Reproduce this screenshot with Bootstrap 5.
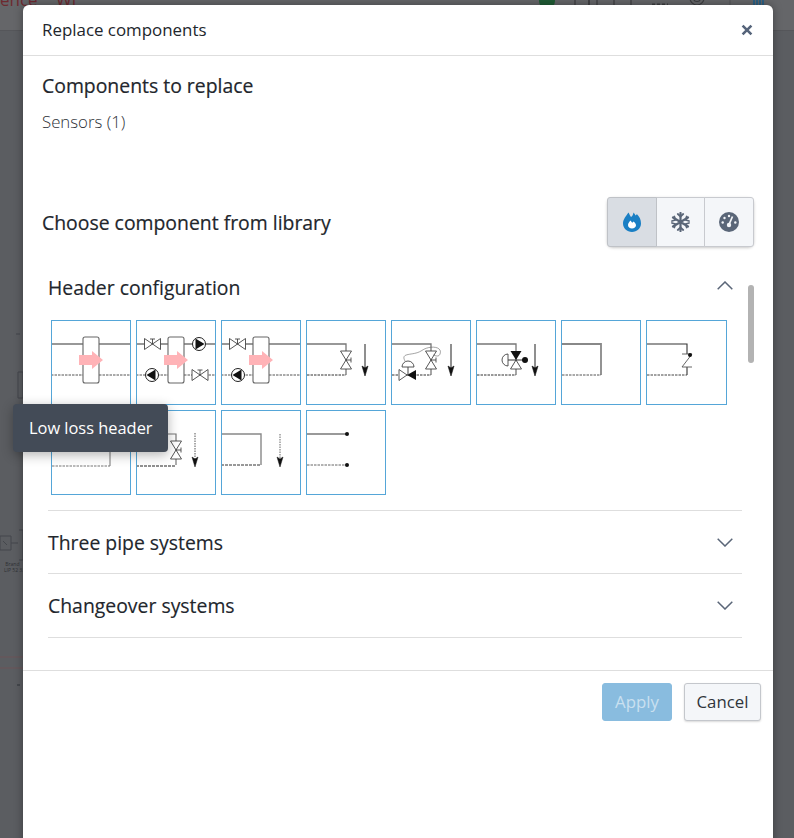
<!DOCTYPE html>
<html lang="en"><head><meta charset="utf-8"><title>Replace components</title>
<link href="https://cdn.jsdelivr.net/npm/bootstrap@5.3.0/dist/css/bootstrap.min.css" rel="stylesheet">
<style>
html,body{height:838px;overflow:hidden}
body{background:#5b5d61;font-family:"Open Sans","Noto Sans",sans-serif;color:#212529;position:relative}
.appbar{height:31px;background:#656669;border-bottom:1px solid #55565a;overflow:hidden;font-size:17px;line-height:1;color:#6e2a30;position:absolute;top:0;left:0;right:0}
.appbar span{position:absolute;top:-9px}
.appbar svg{position:absolute;left:530px;top:-14px}
.bgmark{position:absolute;left:0;top:0}
.bg-note{position:absolute;left:4px;font-size:5px;line-height:1;color:#2e3034;white-space:nowrap}
.dlg-wrap{padding:5px 21px 0 23px;position:relative}
.dlg{height:900px;border:0;border-radius:6px;background:#fff;box-shadow:0 0 10px rgba(0,0,0,.35)}
.dlg .modal-header{height:51px;padding:0 18px 0 19px;border-bottom:1px solid #dedede;border-radius:6px 6px 0 0}
.dlg-title{font-size:16.9px;font-weight:400;color:#22262c;margin:0}
.x-close{background:none;border:0;padding:0;width:16px;height:16px;line-height:0}
.dlg-body{height:614px;flex:none;padding:0;position:relative}
.sub-h{font-size:19.4px;font-weight:500;margin:0;color:#22262c;-webkit-text-stroke:.2px #22262c}
.sec-top{padding:18px 19px 0}
.count{font-size:16.8px;font-weight:300;color:#2c3036;margin-top:12px}
.chooser{padding:0 19px 0;margin-top:63px;height:50px}
.type-group{width:147px;height:50px;box-shadow:0 1px 3px rgba(0,0,0,.22)}
.type-group .btn{width:49px;padding:0;background:#f4f6f9;border:1px solid #c8cacf;display:flex;align-items:center;justify-content:center;border-radius:0}
.type-group .btn.active{background:#d9dde3;border-color:#bfc2c7}
.type-group .btn:first-child{border-radius:3px 0 0 3px}
.type-group .btn:last-child{border-radius:0 3px 3px 0}
.acc{margin:16px 0 0 25px;width:694px}
.acc-item{border:0;border-bottom:1px solid #dedede;border-radius:0;background:#fff}
.acc-head{height:62px;display:flex;align-items:center;justify-content:space-between;padding:0 9px 0 0;font-size:19.4px;color:#22262c;font-weight:400;-webkit-text-stroke:.15px #22262c}
.acc-head.acc-first{height:48px}
.acc-first svg{margin-top:-4px}
.acc-head.acc-mid{padding-top:1px}
.acc-head.acc-last{height:63px}
.tile-grid{display:grid;grid-template-columns:repeat(8,80px);grid-auto-rows:85px;gap:5px;padding:9px 0 15px 3px}
.tile{border:1px solid #55a6d8;background:#fff;width:80px;height:85px;display:block}
.tile:nth-child(8){width:81px}
.tile svg{display:block}
.scroll-thumb{position:absolute;left:725px;top:229px;width:6px;height:78px;border-radius:3px;background:#b3b3b3}
.dlg-foot{height:65px;padding:12px 12px 0 0;border-top:1px solid #dedede;display:flex;justify-content:flex-end;align-items:flex-start;gap:12px}
.dlg-foot .btn{height:38px;font-size:16.8px;line-height:1;padding:1px 0 0;border-radius:3px;font-weight:400}
.btn-apply{width:70px;background:#89bcdf;border:1px solid #89bcdf;color:#c9e0f0}
.btn-apply:disabled{background:#89bcdf;border-color:#89bcdf;color:#c9e0f0;opacity:1}
.btn-cancel{width:77px;background:#f4f6f9;border:1px solid #c4c7cc;color:#2f343b;box-shadow:0 1px 2px rgba(0,0,0,.15)}
.tip{position:absolute;left:13px;top:404px;width:155px;height:48px;background:#434b57;color:#fff;border-radius:4px;font-size:16.4px;font-weight:400;display:flex;align-items:center;padding-left:16px;box-shadow:0 3px 12px rgba(0,0,0,.3);z-index:20}
</style></head><body>
<div class="appbar"><span style="left:0">ence</span><span style="left:56px">Wi</span>
<svg width="240" height="30" viewBox="0 0 240 30" fill="none" stroke="#3c3d40" stroke-width="1.2"><circle cx="17" cy="15" r="8" fill="#1f5c35" stroke="none"/><rect x="45" y="6" width="14" height="15"/><rect x="59" y="10" width="8" height="11"/><rect x="84" y="8" width="17" height="13"/><path d="M122 19h16" stroke-dasharray="3 2" stroke-width="3"/><circle cx="167" cy="12" r="7"/><circle cx="167" cy="12" r="3.5"/><path d="M200 0V30" stroke="#55565a"/><path d="M224 19v-6m3 6v-8m3 8v-6m3 6v-9" stroke="#1e5f8a" stroke-width="1.6"/></svg></div>
<svg class="bgmark" width="23" height="838" viewBox="0 0 23 838" fill="none" stroke="#44474c" stroke-width="1"><path d="M16 334h4M18 372h5v26h-5zM0 536h11v14H0zM11 543h7M19 530h4v30h-4M3 541l4 4"/><path d="M0 657h23M0 668h23" stroke="#6c5558"/><path d="M17 685h3" stroke-width="2"/></svg>
<span class="bg-note" style="top:562px">&nbsp;Brand</span><span class="bg-note" style="top:568px">LIP 52 33</span>

<svg width="0" height="0" class="d-block position-absolute"><defs>
<g id="lines" fill="none"><path d="M0 24H32M48 24H80" stroke="#777" stroke-width="1.3"/><path d="M0 55H32M48 55H80" stroke="#555" stroke-width="1" stroke-dasharray="2.5 1"/></g>
<g id="hdr"><rect x="32" y="17" width="16" height="46" rx="2" fill="#fff" stroke="#666" stroke-width="1.1"/><path d="M28 35H41V31L52 40 41 49V45H28Z" fill="#ffb3b7"/></g>
<g id="hv" fill="#fff" stroke="#444" stroke-width=".9"><path d="M0-5.5V5.5L8 0ZM16-5.5V5.5L8 0Z" transform="translate(-8 0)"/><path d="M0 0V-5M-2.5-5H2.5" fill="none"/></g>
<g id="vv" fill="#fff" stroke="#444" stroke-width=".9"><path d="M-5.5-9H5.5L0 0ZM-5.5 9H5.5L0 0Z"/><path d="M0 0H5M5-2.5V2.5" fill="none"/></g>
<g id="pump"><circle r="6.5" fill="#fff" stroke="#222" stroke-width="1"/><path d="M-3.5-5.5 5.5 0-3.5 5.5Z" fill="#111"/></g>
<g id="pumpl"><circle r="6.5" fill="#fff" stroke="#222" stroke-width="1"/><path d="M3.5-5.5-5.5 0 3.5 5.5Z" fill="#111"/></g>
<g id="loop" fill="none"><path d="M0 24H40V55" stroke="#777" stroke-width="1.3"/><path d="M1 55H40" stroke="#333" stroke-width="1" stroke-dasharray="2.5 1"/></g>
<g id="down"><path d="M0 0V28" stroke="#333" stroke-width="1.1"/><path d="M-3 22 0 32 3 22 0 24Z" fill="#111" stroke="#111" stroke-width=".6"/></g>
</defs></svg>

<div class="dlg-wrap">
<div class="modal-content dlg">
 <div class="modal-header"><h5 class="dlg-title">Replace components</h5>
 <button class="x-close" type="button" aria-label="Close"><svg width="16" height="16" viewBox="0 0 16 16"><path d="M3.6 3.6 12.4 12.4M12.4 3.6 3.6 12.4" stroke="#56647a" stroke-width="2.6"/></svg></button></div>
 <div class="modal-body dlg-body">
  <div class="sec-top"><h6 class="sub-h">Components to replace</h6><div class="count">Sensors (1)</div></div>
  <div class="chooser d-flex align-items-center justify-content-between"><h6 class="sub-h">Choose component from library</h6>
   <div class="btn-group type-group" role="group">
    <button type="button" class="btn active"><svg width="18" height="20" viewBox="0 0 18 20"><path d="M5.5 0.5C6.5 2.5 7 3.5 8 5 9.5 4 10 2.5 10.5.5c1 1 1.500 2 2 3 .5-.5 1-1 1.500-1.200C16.500 4.500 18 8 18 11.500 18 16.300 14 20 9 20S0 16.300 0 11.500C0 7.500 3 4 5.500.5Z" fill="#1a7fc4"/><path d="M9 16.500c-2.300 0-4-1.500-4-3.500 0-1.800 1.300-3 2.500-4.500.7 1 1.200 1.500 1.700 2.200.5-.4.8-.7 1.200-1.300 1.500 1 2.600 2.400 2.600 3.900 0 2-1.700 3.200-4 3.200Z" fill="#fff"/></svg></button>
    <button type="button" class="btn"><svg width="19" height="20" viewBox="0 0 19 20" stroke="#5a6678" stroke-width="2.200" fill="none" stroke-linecap="round"><path d="M9.500 1V19M2 5.500 17 14.500M17 5.500 2 14.500"/><path d="M6.800 2 9.500 4.500 12.200 2M6.800 18 9.500 15.500 12.200 18M1 9 4.300 8 3.300 4.500M18 9 14.700 8 15.700 4.500M1 11 4.300 12 3.300 15.500M18 11 14.700 12 15.700 15.500" stroke-width="1.800"/></svg></button>
    <button type="button" class="btn"><svg width="20" height="20" viewBox="0 0 20 20"><circle cx="10" cy="10" r="10" fill="#5a6678"/><path d="M10 12.500 13.500 4.500" stroke="#f4f6f9" stroke-width="1.800"/><circle cx="10" cy="13" r="2.200" fill="#f4f6f9"/><g fill="#f4f6f9"><circle cx="10" cy="4" r="1.200"/><circle cx="5.500" cy="6" r="1.200"/><circle cx="3.700" cy="10.500" r="1.200"/><circle cx="16.300" cy="10.500" r="1.200"/></g></svg></button>
   </div>
  </div>
  <div class="acc">
   <div class="acc-item">
    <div class="acc-head acc-first"><span>Header configuration</span><svg width="16" height="9" viewBox="0 0 16 9" fill="none"><path d="M.7 8.300 8 1l7.300 7.300" stroke="#5a6678" stroke-width="1.500"/></svg></div>
    <div class="tile-grid">
     <div class="tile"><svg width="78" height="83" viewBox="1 1 78 83"><use href="#lines"/><use href="#hdr"/></svg></div>
     <div class="tile"><svg width="78" height="83" viewBox="1 1 78 83"><use href="#lines"/><use href="#hdr"/><use href="#hv" x="16.500" y="24"/><use href="#pump" x="63" y="24"/><use href="#pumpl" x="16" y="55"/><use href="#hv" x="64" y="55"/></svg></div>
     <div class="tile"><svg width="78" height="83" viewBox="1 1 78 83"><use href="#lines"/><use href="#hdr"/><use href="#hv" x="16.500" y="24"/><use href="#pumpl" x="17" y="55"/></svg></div>
     <div class="tile"><svg width="78" height="83" viewBox="1 1 78 83"><use href="#loop"/><use href="#vv" x="40" y="40"/><use href="#down" x="59" y="24"/></svg></div>
     <div class="tile"><svg width="78" height="83" viewBox="1 1 78 83"><use href="#loop"/><use href="#vv" x="40" y="40"/><path d="M16 55 8 49.500V60.500Z" fill="#fff" stroke="#333" stroke-width=".8"/><path d="M16 55 25 50V60Z" fill="#111"/><path d="M17 55V47" stroke="#444"/><path d="M11 47a6 6 0 0 1 12 0Z" fill="#fff" stroke="#444" stroke-width=".9"/><path d="M14 41C9 32 22 36 30 31 38 25 52 26 49 34 48 37 45 36 42 35" fill="none" stroke="#666" stroke-width=".6"/><use href="#down" x="60" y="24"/></svg></div>
     <div class="tile"><svg width="78" height="83" viewBox="1 1 78 83"><use href="#loop"/><path d="M34.500 31H45.500L40 40Z" fill="#111"/><path d="M34.500 49H45.500L40 40Z" fill="#fff" stroke="#444" stroke-width=".9"/><path d="M32 40H49" stroke="#333"/><path d="M32 34a6 6 0 0 0 0 12Z" fill="#fff" stroke="#444" stroke-width=".9"/><circle cx="49" cy="40" r="3" fill="#111"/><use href="#down" x="59" y="24"/></svg></div>
     <div class="tile"><svg width="78" height="83" viewBox="1 1 78 83"><path d="M0 24H40V55" fill="none" stroke="#888" stroke-width="1.800"/><path d="M1 55H40" stroke="#555" stroke-dasharray="2.500 1"/></svg></div>
     <div class="tile"><svg width="79" height="83" viewBox="1 1 79 83"><path d="M0 24H41V34M41 47V55" fill="none" stroke="#333" stroke-width="1.100"/><path d="M36 34H46L36 47H46" fill="none" stroke="#555" stroke-width=".9"/><path d="M1 55H41" stroke="#444" stroke-dasharray="2.500 1"/><circle cx="44" cy="35" r="2" fill="#111"/></svg></div>
     <div class="tile"><svg width="78" height="83" viewBox="1 1 78 83"><path d="M0 24H59V56" fill="none" stroke="#777"/><path d="M1 56H59" stroke="#777" stroke-dasharray="2.500 1"/><path d="M41 30V42" stroke="#666"/></svg></div>
     <div class="tile"><svg width="78" height="83" viewBox="1 1 78 83"><path d="M0 24H40V55" fill="none" stroke="#777" stroke-width="1.200"/><path d="M0 56H40" stroke="#222" stroke-dasharray="3 1"/><use href="#vv" x="40" y="40"/><path d="M59 23V54" stroke="#555" stroke-dasharray="1.500 1"/><path d="M56 47 59 57 62 47 59 49Z" fill="#111" stroke="#111" stroke-width=".5"/></svg></div>
     <div class="tile"><svg width="78" height="83" viewBox="1 1 78 83"><path d="M0 24H40V55" fill="none" stroke="#888" stroke-width="1.400"/><path d="M0 55H40" stroke="#333" stroke-dasharray="3 1"/><path d="M59 24V50" stroke="#666" stroke-dasharray="1.500 1"/><path d="M56 47 59 57 62 47 59 49Z" fill="#111" stroke="#111" stroke-width=".5"/></svg></div>
     <div class="tile"><svg width="78" height="83" viewBox="1 1 78 83"><path d="M0 24H41" stroke="#777" stroke-width="1.400"/><path d="M1 55H41" stroke="#666" stroke-dasharray="2.500 1"/><circle cx="41" cy="24" r="2" fill="#111"/><circle cx="41" cy="55" r="2" fill="#111"/></svg></div>
    </div>
   </div>
   <div class="acc-item"><div class="acc-head acc-mid"><span>Three pipe systems</span><svg width="16" height="9" viewBox="0 0 16 9" fill="none"><path d="M.7.7 8 8l7.300-7.300" stroke="#5a6678" stroke-width="1.500"/></svg></div></div>
   <div class="acc-item"><div class="acc-head acc-last"><span>Changeover systems</span><svg width="16" height="9" viewBox="0 0 16 9" fill="none"><path d="M.7.7 8 8l7.300-7.300" stroke="#5a6678" stroke-width="1.500"/></svg></div></div>
  </div>
  <div class="scroll-thumb"></div>
 </div>
 <div class="dlg-foot"><button class="btn btn-apply" type="button" disabled>Apply</button><button class="btn btn-cancel" type="button">Cancel</button></div>
</div>
</div>
<div class="tip" role="tooltip">Low loss header</div>
</body></html>
